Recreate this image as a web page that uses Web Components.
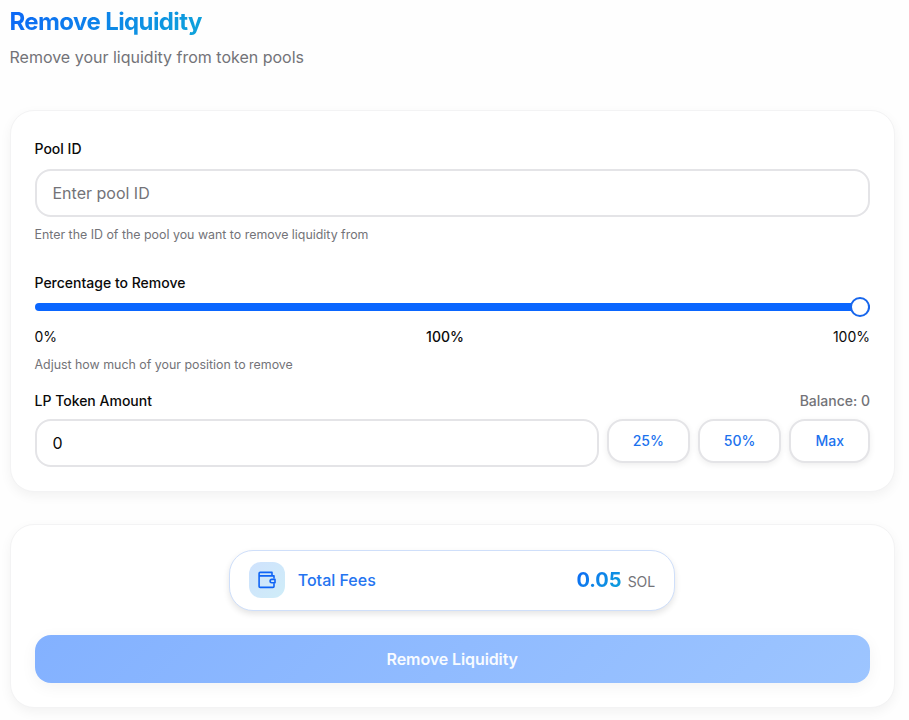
<!DOCTYPE html>
<html lang="en">
<head>
<meta charset="UTF-8">
<title>Remove Liquidity</title>
<style>
    :root {
        --primary: #0a66ff;
        --text: #0a0a0a;
        --muted: #737378;
        --border: #e4e4e7;
        --gradient: linear-gradient(135deg, #0d66f7, #0ea5d9);
    }

    body {
        margin: 0;
        height: 720px;
        overflow: hidden;
        background: #fefefe;
        color: var(--text);
        font-family: Inter, 'Liberation Sans', sans-serif;
        font-size: 14px;
    }
</style>
</head>
<body>
<liquidity-page></liquidity-page>

<script>
class UIElement extends HTMLElement {
    constructor() {
        super();
        this.attachShadow({ mode: 'open' });
    }

    connectedCallback() {
        this.shadowRoot.innerHTML = this.render();
    }
}

class PageHeader extends UIElement {
    render() {
        return `
            <style>
                :host { display: flex; flex-direction: column; align-items: flex-start; gap: 7px; }
                h1 {
                    margin: 0;
                    font-size: 24px;
                    line-height: 32px;
                    font-weight: 700;
                    letter-spacing: -0.6px;
                    color: transparent;
                    background: var(--gradient);
                    -webkit-background-clip: text;
                    background-clip: text;
                }
                p { margin: 0; font-size: 16px; line-height: 24px; color: var(--muted); }
            </style>
            <h1>${this.getAttribute('heading')}</h1>
            <p><slot></slot></p>
        `;
    }
}

class UICard extends UIElement {
    render() {
        return `
            <style>
                :host {
                    display: flex;
                    flex-direction: column;
                    box-sizing: border-box;
                    padding: 24px;
                    background: #fff;
                    border: 1px solid #f3f3f4;
                    border-radius: 24px;
                    box-shadow: 0 4px 12px rgba(0, 0, 0, 0.05);
                }
            </style>
            <slot></slot>
        `;
    }
}

class FormField extends UIElement {
    render() {
        const hint = this.getAttribute('hint');
        const aside = this.getAttribute('aside');
        return `
            <style>
                :host { display: flex; flex-direction: column; }
                .head { display: flex; justify-content: space-between; line-height: 20px; font-weight: 500; }
                .aside { color: var(--muted); }
                .body { display: flex; align-items: flex-start; gap: 8px; margin-top: var(--field-gap, 8px); }
                .hint { margin: 8px 0 0; font-size: 12.4px; line-height: 20px; color: var(--muted); }
            </style>
            <div class="head">
                <span>${this.getAttribute('label')}</span>
                ${aside ? `<span class="aside">${aside}</span>` : ''}
            </div>
            <div class="body"><slot></slot></div>
            ${hint ? `<p class="hint">${hint}</p>` : ''}
        `;
    }
}

class TextInput extends UIElement {
    render() {
        return `
            <style>
                :host { display: block; flex: 1; min-width: 0; }
                input {
                    display: block;
                    box-sizing: border-box;
                    width: 100%;
                    height: 48px;
                    padding: 0 16px;
                    font: inherit;
                    font-size: 16px;
                    color: var(--text);
                    background: #fff;
                    border: 2px solid var(--border);
                    border-radius: 16px;
                    outline: none;
                }
                input::placeholder { color: var(--muted); }
            </style>
            <input type="text" placeholder="${this.getAttribute('placeholder') || ''}" value="${this.getAttribute('value') || ''}">
        `;
    }
}

class RangeSlider extends UIElement {
    render() {
        return `
            <style>
                :host { display: block; flex: 1; }
                .track {
                    display: flex;
                    align-items: center;
                    justify-content: flex-end;
                    height: 8px;
                    border-radius: 4px;
                    background: var(--primary);
                }
                .thumb {
                    box-sizing: border-box;
                    flex: none;
                    width: 20px;
                    height: 20px;
                    border: 2px solid #1766ec;
                    border-radius: 50%;
                    background: #fff;
                }
                .scale { display: flex; justify-content: space-between; margin-top: 16px; line-height: 20px; }
                .current { font-weight: 500; }
            </style>
            <div class="track"><div class="thumb"></div></div>
            <div class="scale">
                <span>0%</span>
                <span class="current">${this.getAttribute('value')}%</span>
                <span>100%</span>
            </div>
        `;
    }
}

class PresetButton extends UIElement {
    render() {
        return `
            <style>
                :host { display: block; }
                button {
                    display: block;
                    box-sizing: border-box;
                    height: 44px;
                    padding: 0 24px 1px;
                    font: inherit;
                    font-weight: 500;
                    color: #1b72ee;
                    background: #fff;
                    border: 2px solid var(--border);
                    border-radius: 16px;
                    box-shadow: 0 2px 6px rgba(0, 0, 0, 0.07);
                }
            </style>
            <button type="button"><slot></slot></button>
        `;
    }
}

class FeeSummary extends UIElement {
    render() {
        return `
            <style>
                :host {
                    display: flex;
                    align-items: center;
                    align-self: center;
                    box-sizing: border-box;
                    width: 446px;
                    height: 61px;
                    padding: 0 19px 1px;
                    background: #fff;
                    border: 1px solid #cfdffa;
                    border-radius: 24px;
                    box-shadow: 0 3px 6px rgba(0, 0, 0, 0.11);
                }
                .icon {
                    display: flex;
                    align-items: center;
                    justify-content: center;
                    width: 36px;
                    height: 36px;
                    border-radius: 12px;
                    background: linear-gradient(135deg, #cfe2fd, #cfedf8);
                    color: #0f64f5;
                }
                .label { flex: 1; margin-left: 12.5px; font-size: 16px; font-weight: 500; color: #2474f0; }
                .amount {
                    font-size: 20px;
                    font-weight: 700;
                    color: transparent;
                    background: var(--gradient);
                    -webkit-background-clip: text;
                    background-clip: text;
                }
                .value { display: flex; align-items: baseline; gap: 6px; }
                .unit { color: var(--muted); }
            </style>
            <div class="icon">
                <svg width="20" height="20" viewBox="0 0 20 20" fill="none" stroke="currentColor" stroke-width="1.6" stroke-linejoin="round" stroke-linecap="round">
                    <path d="M17 8V5.9H2.1M2.1 5.9V16.4a1 1 0 0 0 1 1H16a1 1 0 0 0 1-1V13.8M2.1 5.9V3.4a1 1 0 0 1 1-1H15V5.9"/>
                    <path d="M18 9.4H14.8a1.7 1.7 0 0 0 0 3.4H18Z"/>
                </svg>
            </div>
            <span class="label">Total Fees</span>
            <div class="value"><span class="amount">${this.getAttribute('amount')}</span><span class="unit">${this.getAttribute('unit')}</span></div>
        `;
    }
}

class SubmitButton extends UIElement {
    render() {
        return `
            <style>
                :host { display: block; }
                button {
                    display: block;
                    width: 100%;
                    height: 48px;
                    padding: 0;
                    font: inherit;
                    font-size: 16px;
                    font-weight: 600;
                    letter-spacing: -0.1px;
                    color: #f8fbff;
                    background: linear-gradient(135deg, #83b1ff, #9dc5ff);
                    border: 0;
                    border-radius: 16px;
                    box-shadow: 0 4px 16px rgba(0, 0, 0, 0.05);
                }
            </style>
            <button type="button" disabled><slot></slot></button>
        `;
    }
}

class LiquidityPage extends UIElement {
    render() {
        return `
            <style>
                :host { display: flex; flex-direction: column; padding: 6px 14px 0 9.5px; }
                .form { margin-top: 41px; }
                .summary { margin-top: 32px; padding-top: 25px; gap: 24px; }
                form-field:first-child { --field-gap: 10px; margin-top: 4px; }
                .percentage { --field-gap: 10px; margin-top: 28px; }
                .amount { margin-top: 16px; }
            </style>
            <page-header heading="Remove Liquidity">Remove your liquidity from token pools</page-header>
            <ui-card class="form">
                <form-field label="Pool ID" hint="Enter the ID of the pool you want to remove liquidity from">
                    <text-input placeholder="Enter pool ID"></text-input>
                </form-field>
                <form-field class="percentage" label="Percentage to Remove" hint="Adjust how much of your position to remove">
                    <range-slider value="100"></range-slider>
                </form-field>
                <form-field class="amount" label="LP Token Amount" aside="Balance: 0">
                    <text-input value="0"></text-input>
                    <preset-button>25%</preset-button>
                    <preset-button>50%</preset-button>
                    <preset-button>Max</preset-button>
                </form-field>
            </ui-card>
            <ui-card class="summary">
                <fee-summary amount="0.05" unit="SOL"></fee-summary>
                <submit-button>Remove Liquidity</submit-button>
            </ui-card>
        `;
    }
}

customElements.define('page-header', PageHeader);
customElements.define('ui-card', UICard);
customElements.define('form-field', FormField);
customElements.define('text-input', TextInput);
customElements.define('range-slider', RangeSlider);
customElements.define('preset-button', PresetButton);
customElements.define('fee-summary', FeeSummary);
customElements.define('submit-button', SubmitButton);
customElements.define('liquidity-page', LiquidityPage);
</script>
</body>
</html>
